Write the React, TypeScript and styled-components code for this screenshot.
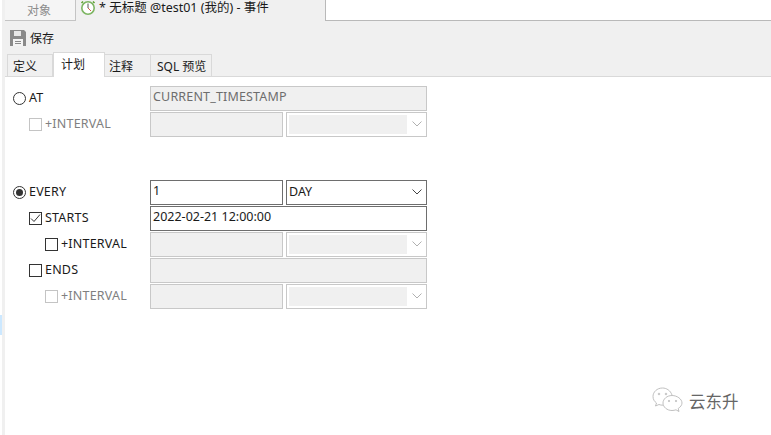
import styled, { createGlobalStyle } from 'styled-components';

const GlobalStyle = createGlobalStyle`
    html, body {
        margin: 0;
        padding: 0;
        background: #ffffff;
    }
    body {
        width: 771px;
        height: 435px;
        overflow: hidden;
        font-family: "Noto Sans", "Noto Sans CJK SC", sans-serif;
        font-size: 12.5px;
        color: #1a1a1a;
    }
`;

const Window = styled.div`
    display: flex;
    width: 771px;
    height: 435px;
    background: #ffffff;
`;

const SideStrip = styled.div`
    width: 5px;
    flex: none;
    box-sizing: border-box;
    border-right: 3px solid #f0f0f0;
    display: flex;
    flex-direction: column;
    padding-top: 315px;
`;

const SideMark = styled.div`
    width: 2px;
    height: 20px;
    background: #cce8ff;
`;

const Main = styled.div`
    flex: 1;
    min-width: 0;
    display: flex;
    flex-direction: column;
`;

const Header = styled.div`
    height: 77px;
    flex: none;
    box-sizing: border-box;
    background: #f0f0f0;
    display: flex;
    flex-direction: column;
    border-bottom: 1px solid #d9d9d9;
`;

const DocTabs = styled.div`
    height: 21px;
    flex: none;
    display: flex;
    align-items: flex-start;
`;

const ObjectTab = styled.div`
    width: 71px;
    height: 21px;
    box-sizing: border-box;
    border-right: 1px solid #c4c4c4;
    border-bottom: 1px solid #c4c4c4;
    background: #f5f5f5;
    color: #8c8c8c;
    font-size: 12px;
    display: flex;
    align-items: center;
    justify-content: center;
    padding-right: 2px;
`;

const ActiveDocTab = styled.div`
    width: 249px;
    height: 21px;
    box-sizing: border-box;
    display: flex;
    align-items: flex-start;
    gap: 3px;
    padding-left: 4px;
    color: #1a1a1a;
    line-height: 15px;
`;

const BlankArea = styled.div`
    flex: 1;
    height: 21px;
    box-sizing: border-box;
    background: #ffffff;
    border-left: 1px solid #b9b9b9;
    border-bottom: 1px solid #b9b9b9;
`;

const Toolbar = styled.div`
    height: 33px;
    flex: none;
    display: flex;
    align-items: center;
    gap: 4px;
    padding-left: 5px;
    box-sizing: border-box;
    font-size: 12px;
`;

const InnerTabs = styled.div`
    height: 22px;
    flex: none;
    display: flex;
    align-items: flex-end;
    padding-left: 2px;
    font-size: 12px;
`;

const InnerTab = styled.div<{ $active?: boolean; $w: number; $pad: number }>`
    width: ${({ $w }) => $w}px;
    height: ${({ $active }) => ($active ? 25 : 22)}px;
    margin-bottom: ${({ $active }) => ($active ? -1 : 0)}px;
    flex: none;
    box-sizing: border-box;
    background: ${({ $active }) => ($active ? '#ffffff' : '#f0f0f0')};
    border: 1px solid #d9d9d9;
    border-bottom: none;
    border-left-width: ${({ $active }) => ($active ? 1 : 0)}px;
    display: flex;
    align-items: ${({ $active }) => ($active ? 'flex-start' : 'center')};
    padding-left: ${({ $pad }) => $pad}px;
    padding-top: ${({ $active }) => ($active ? 2 : 0)}px;
`;

const FirstTab = styled(InnerTab)`
    border-left-width: 1px;
`;

const Form = styled.div`
    display: flex;
    flex-direction: column;
    padding: 8px 0 0 8px;
`;

const FormRow = styled.div<{ $gapTop?: number }>`
    display: grid;
    grid-template-columns: 134px 133px 141px;
    column-gap: 3px;
    height: 26px;
    align-items: center;
    margin-top: ${({ $gapTop }) => $gapTop ?? 0}px;
`;

const LabelCell = styled.div<{ $indent?: number; $disabled?: boolean }>`
    display: flex;
    align-items: center;
    padding-left: ${({ $indent }) => $indent ?? 0}px;
    color: ${({ $disabled }) => ($disabled ? '#808080' : '#1a1a1a')};
`;

const LabelText = styled.span`
    letter-spacing: 0.2px;
    margin-top: -2px;
`;

const RadioOuter = styled.span`
    width: 13px;
    height: 13px;
    box-sizing: border-box;
    border: 1px solid #333333;
    border-radius: 50%;
    margin-right: 3px;
    display: flex;
    align-items: center;
    justify-content: center;
    flex: none;
`;

const RadioDot = styled.span`
    width: 7px;
    height: 7px;
    border-radius: 50%;
    background: #333333;
`;

const CheckBox = styled.span<{ $disabled?: boolean }>`
    width: 13px;
    height: 13px;
    box-sizing: border-box;
    border: 1px solid ${({ $disabled }) => ($disabled ? '#c4c4c4' : '#333333')};
    margin-right: 3px;
    flex: none;
    display: flex;
    align-items: center;
    justify-content: center;
`;

const TextField = styled.div<{ $disabled?: boolean; $span?: boolean }>`
    grid-column: ${({ $span }) => ($span ? '2 / span 2' : 'auto')};
    height: 25px;
    box-sizing: border-box;
    border: 1px solid ${({ $disabled }) => ($disabled ? '#c8c8c8' : '#6e6e6e')};
    background: ${({ $disabled }) => ($disabled ? '#f0f0f0' : '#ffffff')};
    color: ${({ $disabled }) => ($disabled ? '#6d6d6d' : '#1a1a1a')};
    letter-spacing: ${({ $disabled }) => ($disabled ? 0.17 : 0)}px;
    display: flex;
    align-items: center;
    padding-left: 2px;
    padding-bottom: 4px;
`;

const SelectField = styled.div<{ $disabled?: boolean }>`
    height: 25px;
    box-sizing: border-box;
    border: 1px solid ${({ $disabled }) => ($disabled ? '#c8c8c8' : '#6e6e6e')};
    background: #ffffff;
    display: flex;
    align-items: center;
    padding: 0 0 0 2px;
`;

const SelectValue = styled.div<{ $disabled?: boolean }>`
    width: 118px;
    height: 19px;
    background: ${({ $disabled }) => ($disabled ? '#f0f0f0' : 'transparent')};
    display: flex;
    align-items: center;
    flex: none;
    padding-bottom: 2px;
    box-sizing: border-box;
`;

const ChevronBox = styled.div`
    flex: 1;
    display: flex;
    align-items: center;
    justify-content: center;
`;

const Watermark = styled.div`
    position: absolute;
    left: 652px;
    top: 387px;
    display: flex;
    align-items: center;
    gap: 6px;
    font-family: "Noto Sans CJK SC", sans-serif;
    font-size: 16.5px;
    color: #666666;
`;

const ClockIcon = () => (
    <svg width="16" height="17" viewBox="0 0 16 17">
        <path d="M3 1.5 L1.5 3 M13 1.5 L14.5 3" stroke="#5aa02c" strokeWidth="1.5" />
        <circle cx="8" cy="8" r="6.2" fill="#ffffff" stroke="#7cb562" strokeWidth="1.6" />
        <path d="M8 3.5 V8" fill="none" stroke="#555555" strokeWidth="1" />
        <path d="M8 8 L11 11" fill="none" stroke="#d0604e" strokeWidth="1" />
    </svg>
);

const SaveIcon = () => (
    <svg width="16" height="16" viewBox="0 0 16 16">
        <path d="M0 0 H14 L16 2 V16 H0 Z" fill="#8a8a8a" />
        <rect x="4" y="1" width="7" height="5" fill="#e8e8e8" />
        <rect x="3" y="9" width="10" height="7" fill="#f4f4f4" />
        <rect x="5" y="11" width="6" height="1" fill="#8a8a8a" />
        <rect x="5" y="13" width="6" height="1" fill="#8a8a8a" />
    </svg>
);

const Chevron = ({ disabled }: { disabled?: boolean }) => (
    <svg width="10" height="6" viewBox="0 0 10 6">
        <path d="M0.5 0.5 L5 5 L9.5 0.5" fill="none" stroke={disabled ? '#b0b0b0' : '#444444'} />
    </svg>
);

const Tick = () => (
    <svg width="11" height="11" viewBox="0 0 11 11">
        <path d="M1 5.5 L4 8.5 L10 1.5" fill="none" stroke="#333333" />
    </svg>
);

const WeChatIcon = () => (
    <svg width="31" height="27" viewBox="0 0 31 27" fill="none" stroke="#b0b0b0" strokeWidth="0.8">
        <path d="M20 8 C18.5 3.5 14.5 1 10.5 1 C5 1 1 5 1 9.5 C1 12.5 2.5 14.5 4.5 16 L3.5 19 L7 17.5 C8 18 9.5 18.2 11 18.2" />
        <path d="M20 8.5 C15 8.5 11 12 11 16 C11 20 15 23.5 20 23.5 C21.5 23.5 22.5 23.2 24 22.8 L27 24.5 L26.2 21.5 C28.5 20 30 18 30 16 C30 12 25 8.5 20 8.5 Z" />
        <circle cx="7" cy="7" r="0.8" />
        <circle cx="14" cy="7" r="0.8" />
        <circle cx="17" cy="14" r="0.7" />
        <circle cx="24" cy="14" r="0.7" />
    </svg>
);

const IntervalSelects = ({ disabled }: { disabled?: boolean }) => (
    <>
        <TextField $disabled={disabled} />
        <SelectField $disabled={disabled}>
            <SelectValue $disabled={disabled} />
            <ChevronBox>
                <Chevron disabled={disabled} />
            </ChevronBox>
        </SelectField>
    </>
);

export default function App() {
    return (
        <Window>
            <GlobalStyle />
            <SideStrip>
                <SideMark />
            </SideStrip>
            <Main>
                <Header>
                    <DocTabs>
                        <ObjectTab>对象</ObjectTab>
                        <ActiveDocTab>
                            <ClockIcon />
                            <span>* 无标题 @test01 (我的) - 事件</span>
                        </ActiveDocTab>
                        <BlankArea />
                    </DocTabs>
                    <Toolbar>
                        <SaveIcon />
                        <span>保存</span>
                    </Toolbar>
                    <InnerTabs>
                        <FirstTab $w={46} $pad={5}>定义</FirstTab>
                        <InnerTab $w={52} $pad={7} $active>计划</InnerTab>
                        <InnerTab $w={46} $pad={4}>注释</InnerTab>
                        <InnerTab $w={61} $pad={6}>SQL 预览</InnerTab>
                    </InnerTabs>
                </Header>
                <Form>
                    <FormRow>
                        <LabelCell>
                            <RadioOuter />
                            <LabelText>AT</LabelText>
                        </LabelCell>
                        <TextField $disabled $span>CURRENT_TIMESTAMP</TextField>
                    </FormRow>
                    <FormRow>
                        <LabelCell $indent={16} $disabled>
                            <CheckBox $disabled />
                            <LabelText>+INTERVAL</LabelText>
                        </LabelCell>
                        <IntervalSelects disabled />
                    </FormRow>
                    <FormRow $gapTop={42}>
                        <LabelCell>
                            <RadioOuter>
                                <RadioDot />
                            </RadioOuter>
                            <LabelText>EVERY</LabelText>
                        </LabelCell>
                        <TextField>1</TextField>
                        <SelectField>
                            <SelectValue>DAY</SelectValue>
                            <ChevronBox>
                                <Chevron />
                            </ChevronBox>
                        </SelectField>
                    </FormRow>
                    <FormRow>
                        <LabelCell $indent={16}>
                            <CheckBox>
                                <Tick />
                            </CheckBox>
                            <LabelText>STARTS</LabelText>
                        </LabelCell>
                        <TextField $span>2022-02-21 12:00:00</TextField>
                    </FormRow>
                    <FormRow>
                        <LabelCell $indent={32}>
                            <CheckBox />
                            <LabelText>+INTERVAL</LabelText>
                        </LabelCell>
                        <IntervalSelects disabled />
                    </FormRow>
                    <FormRow>
                        <LabelCell $indent={16}>
                            <CheckBox />
                            <LabelText>ENDS</LabelText>
                        </LabelCell>
                        <TextField $disabled $span />
                    </FormRow>
                    <FormRow>
                        <LabelCell $indent={32} $disabled>
                            <CheckBox $disabled />
                            <LabelText>+INTERVAL</LabelText>
                        </LabelCell>
                        <IntervalSelects disabled />
                    </FormRow>
                </Form>
            </Main>
            <Watermark>
                <WeChatIcon />
                <span>云东升</span>
            </Watermark>
        </Window>
    );
}
